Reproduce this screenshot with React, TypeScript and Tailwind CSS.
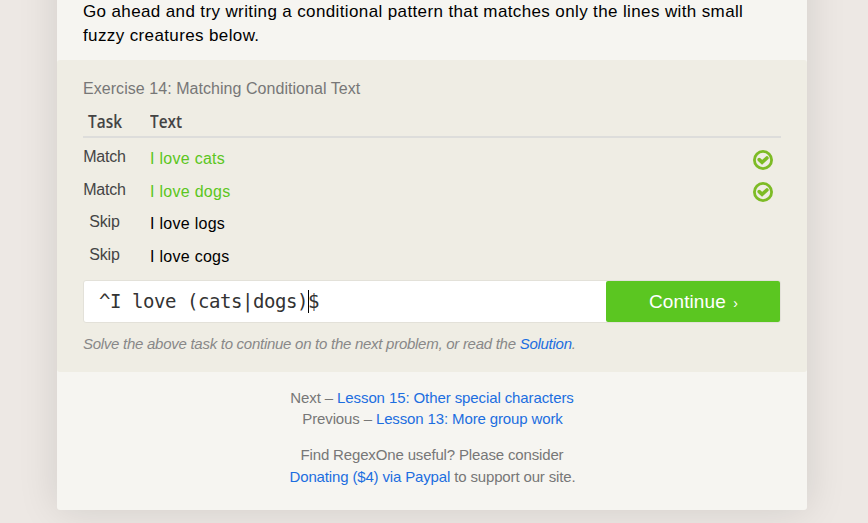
const sans = "font-['Liberation_Sans',Arial,sans-serif]";

function CheckBadge() {
  return (
    <svg className="block size-5" viewBox="0 0 20 20" fill="none">
      <circle cx="10" cy="10" r="8.6" stroke="#7dbb25" strokeWidth="2.8" />
      <path d="M6.2 9.6 L9.1 12.4 L13.9 8" stroke="#7dbb25" strokeWidth="3.6" strokeLinecap="round" />
    </svg>
  );
}

const rows = [
  { task: "Match", text: "I love cats", solved: true },
  { task: "Match", text: "I love dogs", solved: true },
  { task: "Skip", text: "I love logs", solved: false },
  { task: "Skip", text: "I love cogs", solved: false },
];

function ExerciseTable() {
  return (
    <div className="w-[698px]">
      <div className="flex h-[37px] border-b-2 border-[#dddddb] pt-[8px] font-['Open_Sans',sans-serif] text-[17.5px] leading-[24px] font-semibold text-[#444]">
        <span className="w-[44px] scale-x-[0.88] text-center">Task</span>
        <span className="ml-[22.5px] origin-left scale-x-[0.88]">Text</span>
      </div>
      <div className="pt-[4px]">
        {rows.map((row, i) => (
          <div key={i} className="flex h-[32.7px] text-base leading-[24px]">
            <span className="w-[43px] pt-[3px] text-center tracking-[-0.2px] text-[#444]">{row.task}</span>
            <span className={row.solved ? "ml-[24px] pt-[5px] tracking-[0.28px] text-[#5bc621]" : "ml-[24px] pt-[5px] tracking-[0.28px] text-black"}>{row.text}</span>
            {row.solved && (
              <span className="mr-[8px] ml-auto pt-[7.6px]">
                <CheckBadge />
              </span>
            )}
          </div>
        ))}
      </div>
    </div>
  );
}

export default function App() {
  return (
    <div className={`h-[523px] w-[868px] overflow-hidden bg-[#ede8e4] whitespace-nowrap ${sans}`}>
      <main className="ml-[57px] w-[750px]">
        <div className="-mt-[60px] h-[570px] w-[750px] rounded-[3px] bg-[#f6f5f1] pt-[60px] shadow-[0_0_40px_rgba(0,0,0,0.12)]">
          <p className="h-[60px] pl-[26px] text-[17px] leading-[24px] tracking-[0.375px] text-black">
            Go ahead and try writing a conditional pattern that matches only the lines with small
            <br />
            fuzzy creatures below.
          </p>
          <section className="h-[312px] rounded-[3px] bg-[#efede4] pt-[17px] pl-[26px]">
            <h2 className="h-[24px] text-base leading-[24px] tracking-[0.05px] text-[#777]">Exercise 14: Matching Conditional Text</h2>
            <ExerciseTable />
            <div className="mt-[7px] flex h-[43px] w-[698px] items-stretch rounded-[3px] border border-[#e3e1d9] bg-white">
              <div className="flex flex-1 items-center pl-[15px] font-['DejaVu_Sans_Mono',monospace] text-[19px] tracking-[-0.44px] text-[#333]">
                <span>^I love (cats|dogs)</span>
                <span className="-mr-px h-[23px] w-px bg-black" />
                <span>$</span>
              </div>
              <button className="w-[174px] rounded-[2px] bg-[#5bc621] pt-px pl-px text-[19px] tracking-[0.1px] text-white">
                Continue <span className="ml-[2px] text-[14px]">›</span>
              </button>
            </div>
            <p className="pt-[9px] text-[15px] leading-[24px] tracking-[-0.27px] text-[#888] italic">
              Solve the above task to continue on to the next problem, or read the <a className="text-[#1c6ee0]">Solution</a>.
            </p>
          </section>
          <footer className="pt-[15px] text-center text-[15px] leading-[22px] text-[#777]">
            <p className="h-[21px] tracking-[-0.1px]">Next – <a className="text-[#1c6ee0]">Lesson 15: Other special characters</a></p>
            <p className="h-[22px] pl-px tracking-[-0.13px]">Previous – <a className="text-[#1c6ee0]">Lesson 13: More group work</a></p>
            <p className="mt-[14px] h-[22px] tracking-[-0.15px]">Find RegexOne useful? Please consider</p>
            <p className="pl-px tracking-[-0.15px]"><a className="text-[#1c6ee0]">Donating ($4) via Paypal</a> to support our site.</p>
          </footer>
        </div>
      </main>
    </div>
  );
}
